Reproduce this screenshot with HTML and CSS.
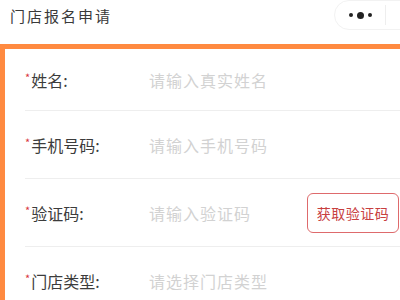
FILE: index.html
```html
<!DOCTYPE html>
<html lang="zh-CN">
<head>
<meta charset="utf-8">
<link rel="stylesheet" href="styles.css">
</head>
<body>
<div class="page">
  <header class="navbar">
    <div class="title">门店报名申请</div>
    <div class="capsule">
      <span class="more"><i class="dot"></i><i class="dot big"></i><i class="dot"></i></span>
      <span class="sep"></span>
      <span class="close"></span>
    </div>
  </header>
  <main class="form">
    <div class="row">
      <label class="label"><span class="req">*</span>姓名:</label>
      <span class="input">请输入真实姓名</span>
    </div>
    <div class="row">
      <label class="label"><span class="req">*</span>手机号码:</label>
      <span class="input">请输入手机号码</span>
    </div>
    <div class="row">
      <label class="label"><span class="req">*</span>验证码:</label>
      <span class="input">请输入验证码</span>
      <button class="code-btn">获取验证码</button>
    </div>
    <div class="row">
      <label class="label"><span class="req">*</span>门店类型:</label>
      <span class="input">请选择门店类型</span>
      <span class="arrow"></span>
    </div>
  </main>
</div>
</body>
</html>
```

FILE: styles.css
```css
html, body {
  margin: 0;
  padding: 0;
  background: #fff;
}
body {
  width: 400px;
  height: 300px;
  overflow: hidden;
  font-family: "Noto Sans CJK SC", "Noto Sans", sans-serif;
}
.page {
  width: 420px;
}
.navbar {
  height: 44px;
  display: flex;
  align-items: center;
  justify-content: space-between;
  padding-left: 10px;
  background: #fff;
}
.title {
  font-size: 15px;
  letter-spacing: 2px;
  color: #3a3a3a;
  margin-top: -14px;
}
.capsule {
  margin-top: -14px;
  width: 90px;
  height: 30px;
  border: 1px solid #f2f2f2;
  border-radius: 16px;
  display: flex;
  align-items: center;
  margin-right: -4px;
  box-sizing: border-box;
}
.more {
  width: 50px;
  display: flex;
  align-items: center;
  justify-content: center;
  gap: 4px;
}
.dot {
  width: 4px;
  height: 4px;
  border-radius: 50%;
  background: #222;
}
.dot.big {
  width: 7px;
  height: 7px;
}
.sep {
  width: 1px;
  height: 20px;
  background: #eee;
}
.form {
  border-top: 5px solid #ff8a40;
  border-left: 5px solid #ff8a40;
  background: #fff;
}
.row {
  height: 67px;
  margin-left: 20px;
  border-bottom: 1px solid #eeeeee;
  display: flex;
  align-items: center;
}
.row:first-child {
  height: 61px;
}
.label {
  width: 124px;
  font-size: 16px;
  color: #3c3c3c;
}
.req {
  color: #d9363e;
  font-size: 11px;
  vertical-align: 5px;
  margin-right: 1px;
}
.input {
  flex: 1;
  font-size: 16px;
  letter-spacing: 1px;
  color: #d2d2d2;
}
.code-btn {
  width: 92px;
  height: 40px;
  margin-right: 21px;
  border: 1px solid #de6a6c;
  border-radius: 6px;
  background: #fff;
  color: #c8403f;
  font-family: "Noto Sans CJK SC", sans-serif;
  font-size: 14px;
  letter-spacing: 0.5px;
  padding: 0;
}
.arrow {
  width: 8px;
  height: 8px;
  border-top: 1.5px solid #bbb;
  border-right: 1.5px solid #bbb;
  transform: rotate(45deg);
  margin-right: 15px;
}
```
